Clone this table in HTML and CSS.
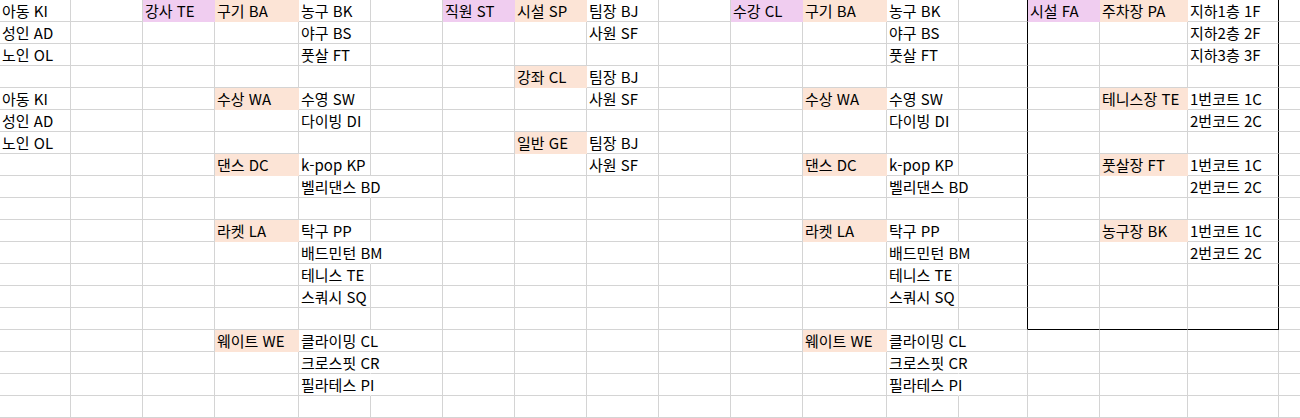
FILE: index.html
```html
<!DOCTYPE html>
<html lang="ko">
<head>
<meta charset="utf-8">
<title>Sheet</title>
<link rel="stylesheet" href="styles.css">
</head>
<body>
<div class="sheet">
<!-- row 1 -->
<div class="c">아동 KI</div><div class="c"></div><div class="c pk">강사 TE</div><div class="c pc">구기 BA</div><div class="c">농구 BK</div><div class="c"></div><div class="c pk">직원 ST</div><div class="c pc">시설 SP</div><div class="c">팀장 BJ</div><div class="c"></div><div class="c pk">수강 CL</div><div class="c pc">구기 BA</div><div class="c">농구 BK</div><div class="c bl"></div><div class="c pk">시설 FA</div><div class="c pc">주차장 PA</div><div class="c bl">지하1층 1F</div><div class="c"></div>
<!-- row 2 -->
<div class="c">성인 AD</div><div class="c"></div><div class="c"></div><div class="c"></div><div class="c">야구 BS</div><div class="c"></div><div class="c"></div><div class="c"></div><div class="c">사원 SF</div><div class="c"></div><div class="c"></div><div class="c"></div><div class="c">야구 BS</div><div class="c bl"></div><div class="c"></div><div class="c"></div><div class="c bl">지하2층 2F</div><div class="c"></div>
<!-- row 3 -->
<div class="c">노인 OL</div><div class="c"></div><div class="c"></div><div class="c"></div><div class="c">풋살 FT</div><div class="c"></div><div class="c"></div><div class="c"></div><div class="c"></div><div class="c"></div><div class="c"></div><div class="c"></div><div class="c">풋살 FT</div><div class="c bl"></div><div class="c"></div><div class="c"></div><div class="c bl">지하3층 3F</div><div class="c"></div>
<!-- row 4 -->
<div class="c"></div><div class="c"></div><div class="c"></div><div class="c"></div><div class="c"></div><div class="c"></div><div class="c"></div><div class="c pc">강좌 CL</div><div class="c">팀장 BJ</div><div class="c"></div><div class="c"></div><div class="c"></div><div class="c"></div><div class="c bl"></div><div class="c"></div><div class="c"></div><div class="c bl"></div><div class="c"></div>
<!-- row 5 -->
<div class="c">아동 KI</div><div class="c"></div><div class="c"></div><div class="c pc">수상 WA</div><div class="c">수영 SW</div><div class="c"></div><div class="c"></div><div class="c"></div><div class="c">사원 SF</div><div class="c"></div><div class="c"></div><div class="c pc">수상 WA</div><div class="c">수영 SW</div><div class="c bl"></div><div class="c"></div><div class="c pc">테니스장 TE</div><div class="c bl">1번코트 1C</div><div class="c"></div>
<!-- row 6 -->
<div class="c">성인 AD</div><div class="c"></div><div class="c"></div><div class="c"></div><div class="c">다이빙 DI</div><div class="c"></div><div class="c"></div><div class="c"></div><div class="c"></div><div class="c"></div><div class="c"></div><div class="c"></div><div class="c">다이빙 DI</div><div class="c bl"></div><div class="c"></div><div class="c"></div><div class="c bl">2번코드 2C</div><div class="c"></div>
<!-- row 7 -->
<div class="c">노인 OL</div><div class="c"></div><div class="c"></div><div class="c"></div><div class="c"></div><div class="c"></div><div class="c"></div><div class="c pc">일반 GE</div><div class="c">팀장 BJ</div><div class="c"></div><div class="c"></div><div class="c"></div><div class="c"></div><div class="c bl"></div><div class="c"></div><div class="c"></div><div class="c bl"></div><div class="c"></div>
<!-- row 8 -->
<div class="c"></div><div class="c"></div><div class="c"></div><div class="c pc">댄스 DC</div><div class="c">k-pop KP</div><div class="c"></div><div class="c"></div><div class="c"></div><div class="c">사원 SF</div><div class="c"></div><div class="c"></div><div class="c pc">댄스 DC</div><div class="c">k-pop KP</div><div class="c bl"></div><div class="c"></div><div class="c pc">풋살장 FT</div><div class="c bl">1번코트 1C</div><div class="c"></div>
<!-- row 9 -->
<div class="c"></div><div class="c"></div><div class="c"></div><div class="c"></div><div class="c ov">벨리댄스 BD</div><div class="c"></div><div class="c"></div><div class="c"></div><div class="c"></div><div class="c"></div><div class="c"></div><div class="c"></div><div class="c ov">벨리댄스 BD</div><div class="c bl"></div><div class="c"></div><div class="c"></div><div class="c bl">2번코드 2C</div><div class="c"></div>
<!-- row 10 -->
<div class="c"></div><div class="c"></div><div class="c"></div><div class="c"></div><div class="c"></div><div class="c"></div><div class="c"></div><div class="c"></div><div class="c"></div><div class="c"></div><div class="c"></div><div class="c"></div><div class="c"></div><div class="c bl"></div><div class="c"></div><div class="c"></div><div class="c bl"></div><div class="c"></div>
<!-- row 11 -->
<div class="c"></div><div class="c"></div><div class="c"></div><div class="c pc">라켓 LA</div><div class="c">탁구 PP</div><div class="c"></div><div class="c"></div><div class="c"></div><div class="c"></div><div class="c"></div><div class="c"></div><div class="c pc">라켓 LA</div><div class="c">탁구 PP</div><div class="c bl"></div><div class="c"></div><div class="c pc">농구장 BK</div><div class="c bl">1번코트 1C</div><div class="c"></div>
<!-- row 12 -->
<div class="c"></div><div class="c"></div><div class="c"></div><div class="c"></div><div class="c ov">배드민턴 BM</div><div class="c"></div><div class="c"></div><div class="c"></div><div class="c"></div><div class="c"></div><div class="c"></div><div class="c"></div><div class="c ov">배드민턴 BM</div><div class="c bl"></div><div class="c"></div><div class="c"></div><div class="c bl">2번코드 2C</div><div class="c"></div>
<!-- row 13 -->
<div class="c"></div><div class="c"></div><div class="c"></div><div class="c"></div><div class="c">테니스 TE</div><div class="c"></div><div class="c"></div><div class="c"></div><div class="c"></div><div class="c"></div><div class="c"></div><div class="c"></div><div class="c">테니스 TE</div><div class="c bl"></div><div class="c"></div><div class="c"></div><div class="c bl"></div><div class="c"></div>
<!-- row 14 -->
<div class="c"></div><div class="c"></div><div class="c"></div><div class="c"></div><div class="c">스쿼시 SQ</div><div class="c"></div><div class="c"></div><div class="c"></div><div class="c"></div><div class="c"></div><div class="c"></div><div class="c"></div><div class="c">스쿼시 SQ</div><div class="c bl"></div><div class="c"></div><div class="c"></div><div class="c bl"></div><div class="c"></div>
<!-- row 15 -->
<div class="c"></div><div class="c"></div><div class="c"></div><div class="c"></div><div class="c"></div><div class="c"></div><div class="c"></div><div class="c"></div><div class="c"></div><div class="c"></div><div class="c"></div><div class="c"></div><div class="c"></div><div class="c bl"></div><div class="c bb"></div><div class="c bb"></div><div class="c bl bb"></div><div class="c"></div>
<!-- row 16 -->
<div class="c"></div><div class="c"></div><div class="c"></div><div class="c pc">웨이트 WE</div><div class="c ov">클라이밍 CL</div><div class="c"></div><div class="c"></div><div class="c"></div><div class="c"></div><div class="c"></div><div class="c"></div><div class="c pc">웨이트 WE</div><div class="c ov">클라이밍 CL</div><div class="c"></div><div class="c"></div><div class="c"></div><div class="c"></div><div class="c"></div>
<!-- row 17 -->
<div class="c"></div><div class="c"></div><div class="c"></div><div class="c"></div><div class="c ov">크로스핏 CR</div><div class="c"></div><div class="c"></div><div class="c"></div><div class="c"></div><div class="c"></div><div class="c"></div><div class="c"></div><div class="c ov">크로스핏 CR</div><div class="c"></div><div class="c"></div><div class="c"></div><div class="c"></div><div class="c"></div>
<!-- row 18 -->
<div class="c"></div><div class="c"></div><div class="c"></div><div class="c"></div><div class="c ov">필라테스 PI</div><div class="c"></div><div class="c"></div><div class="c"></div><div class="c"></div><div class="c"></div><div class="c"></div><div class="c"></div><div class="c ov">필라테스 PI</div><div class="c"></div><div class="c"></div><div class="c"></div><div class="c"></div><div class="c"></div>
<!-- row 19 -->
<div class="c"></div><div class="c"></div><div class="c"></div><div class="c"></div><div class="c"></div><div class="c"></div><div class="c"></div><div class="c"></div><div class="c"></div><div class="c"></div><div class="c"></div><div class="c"></div><div class="c"></div><div class="c"></div><div class="c"></div><div class="c"></div><div class="c"></div><div class="c"></div>
</div>
</body>
</html>
```
FILE: styles.css
```css
html, body {
  margin: 0;
  padding: 0;
  background: #ffffff;
}

.sheet {
  display: grid;
  grid-template-columns: 71px 72px 72px 84px 72px 72px 72px 72px 72px 72px 72px 84px 72px 69px 72px 88px 91px 60px;
  grid-auto-rows: 22px;
  width: 1300px;
  overflow: hidden;
  font-family: "Noto Sans CJK KR", "Noto Sans", sans-serif;
  font-size: 15px;
  color: #000000;
}

.c {
  box-sizing: border-box;
  border-right: 1px solid #d4d4d4;
  border-bottom: 1px solid #d4d4d4;
  padding-left: 2px;
  line-height: 21px;
  white-space: nowrap;
  overflow: visible;
}

.pk {
  background: #f0cdf0;
  border-right-color: #f0cdf0;
  border-bottom-color: #f0cdf0;
}

.pc {
  background: #fce4d6;
  border-right-color: #fce4d6;
  border-bottom-color: #fce4d6;
}

.ov {
  border-right-color: transparent;
}

.bl {
  border-right-color: #000000;
}

.bb {
  border-bottom-color: #000000;
}
```
